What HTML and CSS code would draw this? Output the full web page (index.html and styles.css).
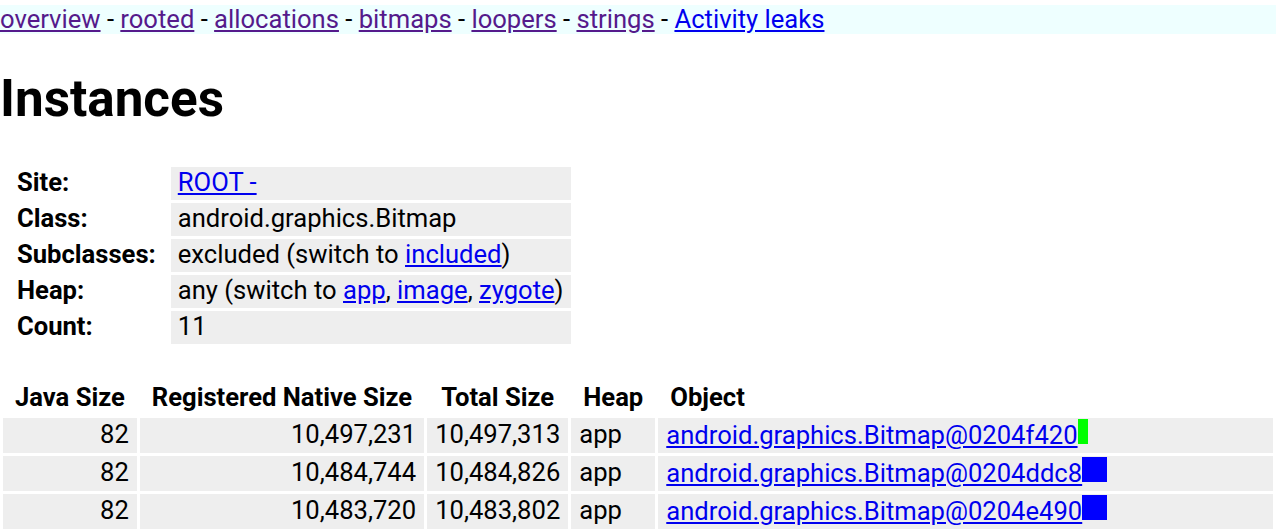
FILE: index.html
```html
<!DOCTYPE html>
<html lang="en">
<head>
 <meta charset="UTF-8">
 <title>Instances</title>
 <link rel="stylesheet" href="styles.css">
</head>
<body>
<div class="menu">
 <a class="seen" href="#">overview</a> -
 <a class="seen" href="#">rooted</a> -
 <a class="seen" href="#">allocations</a> -
 <a class="seen" href="#">bitmaps</a> -
 <a class="seen" href="#">loopers</a> -
 <a class="seen" href="#">strings</a> -
 <a href="#">Activity leaks</a>
</div>
<h1>Instances</h1>
<table class="info">
 <tr><th>Site:</th><td><a href="#">ROOT -</a></td></tr>
 <tr><th>Class:</th><td>android.graphics.Bitmap</td></tr>
 <tr><th>Subclasses:</th><td>excluded (switch to <a href="#">included</a>)</td></tr>
 <tr><th>Heap:</th><td>any (switch to <a href="#">app</a>, <a href="#">image</a>, <a href="#">zygote</a>)</td></tr>
 <tr><th>Count:</th><td>11</td></tr>
</table>
<table class="sizes">
 <tr>
  <th>Java Size</th>
  <th>Registered Native Size</th>
  <th>Total Size</th>
  <th>Heap</th>
  <th class="obj-head">Object</th>
 </tr>
 <tr>
  <td class="num">82</td>
  <td class="num">10,497,231</td>
  <td class="num">10,497,313</td>
  <td>app</td>
  <td class="obj"><a href="#">android.graphics.Bitmap@0204f420</a><span class="thumb thumb-tall"></span></td>
 </tr>
 <tr>
  <td class="num">82</td>
  <td class="num">10,484,744</td>
  <td class="num">10,484,826</td>
  <td>app</td>
  <td class="obj"><a href="#">android.graphics.Bitmap@0204ddc8</a><span class="thumb"></span></td>
 </tr>
 <tr>
  <td class="num">82</td>
  <td class="num">10,483,720</td>
  <td class="num">10,483,802</td>
  <td>app</td>
  <td class="obj"><a href="#">android.graphics.Bitmap@0204e490</a><span class="thumb"></span></td>
 </tr>
</table>
</body>
</html>
```

FILE: styles.css
```css
body {
 margin: 0;
 font-family: Roboto, "Liberation Sans", sans-serif;
 font-size: 25.6px;
 color: #000;
}
a {
 color: #0000ee;
}
a.seen {
 color: #551a8b;
}
div.menu {
 margin-top: 5px;
 line-height: 29px;
 background-color: #eeffff;
}
h1 {
 font-size: 2em;
 line-height: 60px;
 margin: 35px 0 35px 0;
}
table {
 border-spacing: 3px;
}
td, th {
 line-height: 29px;
 padding: 1px 7px 3px 7px;
 white-space: nowrap;
}
td {
 background-color: #eeeeee;
}
.info th {
 text-align: left;
 padding-left: 14px;
 padding-right: 12px;
}
.info td {
 width: 380px;
}
.sizes {
 width: 100%;
 margin-top: 32px;
}
.sizes th {
 padding-left: 12px;
 padding-right: 12px;
}
.sizes td {
 padding-left: 8px;
 padding-right: 8px;
}
.sizes .num {
 text-align: right;
}
.sizes .obj-head {
 text-align: left;
}
.sizes .obj {
 width: 100%;
}
.thumb {
 display: inline-block;
 width: 25px;
 height: 25px;
 background-color: #0000ff;
}
.thumb-tall {
 width: 10px;
 background-color: #00ff00;
}
```
